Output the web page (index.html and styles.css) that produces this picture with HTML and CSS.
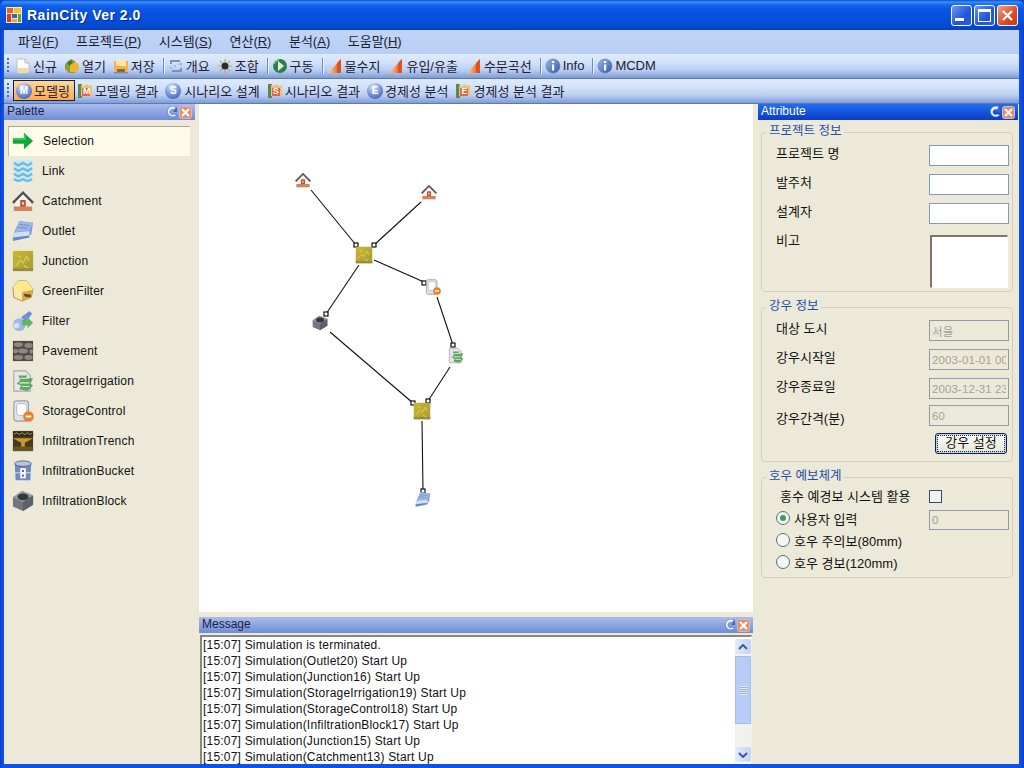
FILE: index.html
```html
<!DOCTYPE html>
<html lang="ko">
<head>
<meta charset="utf-8">
<title>RainCity Ver 2.0</title>
<link rel="stylesheet" href="styles.css">
</head>
<body>
<svg class="sprite" xmlns="http://www.w3.org/2000/svg">
  <defs>
    <linearGradient id="gBlue" x1="0" y1="0" x2="1" y2="1"><stop offset="0" stop-color="#9fb8ea"/><stop offset="1" stop-color="#2f55a5"/></linearGradient>
    <linearGradient id="gOrange" x1="0" y1="0" x2="1" y2="0"><stop offset="0" stop-color="#fbd38a"/><stop offset="1" stop-color="#e2501e"/></linearGradient>
    <linearGradient id="gOlive" x1="0" y1="0" x2="1" y2="1"><stop offset="0" stop-color="#c9b92e"/><stop offset="1" stop-color="#a79a35"/></linearGradient>
    <symbol id="i-arrow" viewBox="0 0 24 24"><path d="M1 9h12V3l10 9-10 9v-6H1z" fill="#11a83a"/><path d="M1 9h12V3l2 2v6H1z" fill="#2ecb55"/></symbol>
    <symbol id="i-link" viewBox="0 0 24 24"><rect x="2" y="0" width="20" height="24" fill="#c9e7f5"/><g fill="none" stroke="#6fb8de" stroke-width="2.400"><path d="M2 3l5 3 5-3 5 3 5-3M2 9l5 3 5-3 5 3 5-3M2 15l5 3 5-3 5 3 5-3M2 21l5 2 5-2 5 2 5-2"/></g></symbol>
    <symbol id="i-house" viewBox="0 0 24 24"><path d="M12 1L0 13l2 2L12 5l10 10 2-2z" fill="#505056"/><path d="M4 13l8-8 8 8v6H4z" fill="#f8f1e6"/><path d="M9 11h6v8H9z" fill="#b5543a"/><path d="M2 18h20v5H2z" fill="#d0855c"/><path d="M11 13h2v3h-2z" fill="#f3d9b0"/></symbol>
    <symbol id="i-outlet" viewBox="0 0 24 24"><path d="M8 1l15 2-2 13-20 5 2-9z" fill="#7e9fd8"/><path d="M8 1l15 2-4 8-15 2z" fill="#9db8e8"/><path d="M1 14l18-2v6L1 22z" fill="#d2def2"/><path d="M1 19l18-2v2L1 23z" fill="#6488c8"/><path d="M8 5l11 1M6 8l11 1" stroke="#6d8dc8"/></symbol>
    <symbol id="i-junction" viewBox="0 0 24 24"><rect x="1" y="1" width="22" height="22" fill="url(#gOlive)"/><path d="M4 17l5-6 3 3 4-7 3 5M6 6l4 2M13 17l5 3" fill="none" stroke="#d8ce66" stroke-width="1.300"/><path d="M1 20h22v3H1z" fill="#958c3f"/></symbol>
    <symbol id="i-greenfilter" viewBox="0 0 24 24"><path d="M7 1L1 8l1 11 9 4 10-4 2-9-7-9z" fill="#fbe7a6" stroke="#8e7b3c" stroke-width=".8"/><path d="M7 1L1 8l9 4 13-2-7-9z" fill="#ffe98b"/><path d="M11 13l11-2-1 8-10 4z" fill="#d7a84a"/><path d="M13 15l8 1-1 3-6-1z" fill="#5e4a20"/></symbol>
    <symbol id="i-filter" viewBox="0 0 24 24"><path d="M10 8l9-7 3 3-7 9z" fill="#6f8fd6"/><circle cx="8" cy="16" r="7" fill="#9db7e6"/><path d="M11 11h6v-3l6 6-6 6v-3h-6z" fill="#61b562"/><circle cx="5" cy="17" r="3" fill="#d5e2f6"/></symbol>
    <symbol id="i-pavement" viewBox="0 0 24 24"><rect x="1" y="1" width="22" height="22" fill="#4f4a46"/><g fill="#8f8880"><ellipse cx="7" cy="5" rx="5" ry="2.500"/><ellipse cx="18" cy="6" rx="4.500" ry="2.700"/><ellipse cx="12" cy="12" rx="5.500" ry="2.700"/><ellipse cx="4" cy="12" rx="2.500" ry="2.500"/><ellipse cx="21" cy="12.500" rx="2" ry="2.500"/><ellipse cx="7" cy="19" rx="5" ry="2.600"/><ellipse cx="18" cy="19" rx="4.500" ry="2.700"/></g></symbol>
    <symbol id="i-irrigation" viewBox="0 0 24 24"><path d="M2 1h13l5 5v17H2z" fill="#e6e6e6" stroke="#a9a9a9" stroke-width="1.200"/><path d="M7 6h10l-2 3h8l-3 6 3 2-6 6-9-2 2-4-5-2 4-4z" fill="#5fa864"/><path d="M9 9h8M8 14h11M11 18h8" stroke="#dcf1da" stroke-width="1.200"/></symbol>
    <symbol id="i-control" viewBox="0 0 24 24"><rect x="2" y="1" width="16" height="22" rx="3" fill="#dfe2e8" stroke="#9c9c9c" stroke-width="1.200"/><path d="M7 4h6a3 3 0 0 1 3 3v10H8a3 3 0 0 1-3-3V6z" fill="#fff" stroke="#aab8cf"/><circle cx="18" cy="18" r="5.800" fill="#e8812c"/><rect x="15" y="17" width="6" height="2" fill="#fff"/></symbol>
    <symbol id="i-trench" viewBox="0 0 24 24"><rect x="1" y="1" width="22" height="22" fill="#473a1e"/><path d="M1 2h22v5H1z" fill="#2f2a1d"/><path d="M2 5l3-2 3 2 3-2 3 2 3-2 3 2 2-2" stroke="#b9a462" fill="none"/><path d="M1 9h22l-9 5v5h-4v-5z" fill="#c99b2d"/><path d="M1 18h22v5H1z" fill="#6b5326"/></symbol>
    <symbol id="i-bucket" viewBox="0 0 24 24"><path d="M3 4h18l-1 18H4z" fill="#7089c0"/><ellipse cx="12" cy="4" rx="9" ry="3" fill="#b7c4e0" stroke="#51648f"/><rect x="9" y="9" width="6" height="11" fill="#fff"/><rect x="11" y="11" width="2" height="2" fill="#40507c"/><rect x="11" y="16" width="2" height="2" fill="#40507c"/><path d="M3 14h6M15 14h6" stroke="#dfe6f4"/></symbol>
    <symbol id="i-block" viewBox="0 0 24 24"><path d="M1 8l10-7 12 5v10l-11 7-11-5z" fill="#73767f"/><path d="M1 8l10-7 12 5-11 7z" fill="#959aa4"/><ellipse cx="12" cy="7.500" rx="6" ry="3.600" fill="#34363d"/><path d="M12 13l11-7v10l-11 7z" fill="#5d6069"/></symbol>
    <symbol id="t-doc" viewBox="0 0 16 16"><path d="M2 1h8l4 4v10H2z" fill="#fff" stroke="#bdbdbd"/><path d="M3 10h10v4H3z" fill="#f4d9a0"/><path d="M10 1v4h4" fill="#e4e4e4" stroke="#bdbdbd"/></symbol>
    <symbol id="t-open" viewBox="0 0 16 16"><path d="M1 6l6-5 4 2 1 4 3 3-4 5H5L1 11z" fill="#8f9c3a"/><path d="M6 5h8l1 4-3 5H6z" fill="#f1b52c"/><path d="M3 4l4-2 2 3-4 3z" fill="#48743a"/></symbol>
    <symbol id="t-save" viewBox="0 0 16 16"><path d="M1 3h14v12H1z" fill="#f3b24c"/><path d="M3 2h10v6H3z" fill="#ffe6a8"/><path d="M4 11h8v3H4z" fill="#8a6d2e"/><path d="M1 14h14v1.500H1z" fill="#7f86b3"/></symbol>
    <symbol id="t-over" viewBox="0 0 16 16"><path d="M2 2h10v2H4v2H2zM14 14H4v-2h8v-2h2z" fill="#7a93b8"/><path d="M6 7h2v2H6zM2 9h2v2H2zM11 5h3v2h-3z" fill="#a3b9d6"/></symbol>
    <symbol id="t-comb" viewBox="0 0 16 16"><circle cx="8" cy="8" r="3.500" fill="#2b2b2b"/><g stroke="#c5a74a" stroke-width="1.200"><path d="M8 1v3M8 12v3M1 8h3M12 8h3M3 3l2 2M11 11l2 2M13 3l-2 2M5 11l-2 2"/></g></symbol>
    <symbol id="t-run" viewBox="0 0 16 16"><circle cx="8" cy="8" r="7" fill="#2e7d4a"/><path d="M6 3l6 5-6 5z" fill="#e6f7d8"/><path d="M2 6a6 6 0 0 1 5-4" stroke="#8fdc9e" fill="none"/></symbol>
    <symbol id="t-tri" viewBox="0 0 16 16"><path d="M14 1v14H1C5 12 9 6 14 1z" fill="url(#gOrange)"/><path d="M10 5l4-4v14h-4z" fill="#e0531d"/></symbol>
    <symbol id="t-info" viewBox="0 0 16 16"><circle cx="8" cy="8" r="7" fill="url(#gBlue)" stroke="#5476b5" stroke-width=".6"/><rect x="7" y="3" width="2.200" height="2" fill="#fff"/><rect x="7" y="6.500" width="2.200" height="6" fill="#fff"/></symbol>
    <symbol id="t-rep" viewBox="0 0 16 16"><path d="M1 1h4v14H1z" fill="#5a8a4a"/><path d="M4 2l3 1 3-2 2 2 3-1v11H4z" fill="#f4c070"/><rect x="5" y="5" width="8" height="8" fill="#e0654a"/></symbol>
    <symbol id="t-refresh" viewBox="0 0 12 12"><path d="M10 1a5.500 5.500 0 1 0 1 8L8 8a2.500 2.500 0 1 1 0-4z" fill="#e9f0fc" stroke="#3f66b5" stroke-width=".6"/><path d="M11 1v5H7z" fill="#3f66b5"/></symbol>
    <symbol id="t-close" viewBox="0 0 13 13"><rect x=".5" y=".5" width="12" height="12" rx="2" fill="#ea8a6a" stroke="#c9c3c0"/><path d="M3 3l7 7M10 3l-7 7" stroke="#fff" stroke-width="2.200"/></symbol>
    <symbol id="t-app" viewBox="0 0 16 16"><rect x="0" y="0" width="16" height="16" fill="#f4e9c8"/><rect x="1" y="1" width="6" height="5" fill="#e8641e"/><rect x="8" y="1" width="7" height="5" fill="#f2c22b"/><rect x="1" y="7" width="4" height="8" fill="#e0392b"/><rect x="6" y="7" width="5" height="4" fill="#3a62b8"/><rect x="12" y="7" width="3" height="8" fill="#5aa24a"/><rect x="6" y="12" width="5" height="3" fill="#f2a12b"/></symbol>
  </defs>
</svg>

<div class="window">
  <header class="titlebar">
    <svg class="app-icon"><use href="#t-app"/></svg>
    <span class="title">RainCity Ver 2.0</span>
    <div class="caption-buttons">
      <div class="cap cap-blue"><span class="cap-min"></span></div>
      <div class="cap cap-blue"><span class="cap-max"></span></div>
      <div class="cap cap-red"><svg class="cap-x" viewBox="0 0 13 13"><path d="M2 2l9 9M11 2l-9 9" stroke="#fff" stroke-width="2.400"/></svg></div>
    </div>
  </header>

  <div class="inner">
    <nav class="menubar">
      <span class="menu">파일(<u>F</u>)</span>
      <span class="menu">프로젝트(<u>P</u>)</span>
      <span class="menu">시스템(<u>S</u>)</span>
      <span class="menu">연산(<u>R</u>)</span>
      <span class="menu">분석(<u>A</u>)</span>
      <span class="menu">도움말(<u>H</u>)</span>
    </nav>

    <div class="toolbar">
      <span class="grip"></span>
      <span class="tool"><svg class="ticon"><use href="#t-doc"/></svg>신규</span>
      <span class="tool"><svg class="ticon"><use href="#t-open"/></svg>열기</span>
      <span class="tool"><svg class="ticon"><use href="#t-save"/></svg>저장</span>
      <span class="sep"></span>
      <span class="tool"><svg class="ticon"><use href="#t-over"/></svg>개요</span>
      <span class="tool"><svg class="ticon"><use href="#t-comb"/></svg>조합</span>
      <span class="sep"></span>
      <span class="tool"><svg class="ticon"><use href="#t-run"/></svg>구동</span>
      <span class="sep"></span>
      <span class="tool tool-tri"><svg class="ticon"><use href="#t-tri"/></svg>물수지</span>
      <span class="tool tool-tri"><svg class="ticon"><use href="#t-tri"/></svg>유입/유출</span>
      <span class="tool"><svg class="ticon"><use href="#t-tri"/></svg>수문곡선</span>
      <span class="sep"></span>
      <span class="tool"><svg class="ticon"><use href="#t-info"/></svg>Info</span>
      <span class="sep"></span>
      <span class="tool"><svg class="ticon"><use href="#t-info"/></svg>MCDM</span>
    </div>

    <div class="toolbar toolbar-second">
      <span class="grip"></span>
      <span class="tool tool-active"><span class="ticon ball">M</span>모델링</span>
      <span class="tool tool-after-active"><span class="ticon rep"><svg class="ticon"><use href="#t-rep"/></svg><b class="rep-letter">M</b></span>모델링 결과</span>
      <span class="tool tool-wide"><span class="ticon ball">S</span>시나리오 설계</span>
      <span class="tool"><span class="ticon rep"><svg class="ticon"><use href="#t-rep"/></svg><b class="rep-letter">S</b></span>시나리오 결과</span>
      <span class="tool"><span class="ticon ball">E</span>경제성 분석</span>
      <span class="tool"><span class="ticon rep"><svg class="ticon"><use href="#t-rep"/></svg><b class="rep-letter">E</b></span>경제성 분석 결과</span>
    </div>

    <main class="workspace">
      <aside class="palette">
        <div class="pane-head pane-head-soft">
          <span>Palette</span>
          <span class="pane-tools"><svg class="pin"><use href="#t-refresh"/></svg><svg class="close"><use href="#t-close"/></svg></span>
        </div>
        <ul class="palette-list">
          <li class="pal pal-selected"><svg class="pal-icon"><use href="#i-arrow"/></svg><span>Selection</span></li>
          <li class="pal"><svg class="pal-icon"><use href="#i-link"/></svg><span>Link</span></li>
          <li class="pal"><svg class="pal-icon"><use href="#i-house"/></svg><span>Catchment</span></li>
          <li class="pal"><svg class="pal-icon"><use href="#i-outlet"/></svg><span>Outlet</span></li>
          <li class="pal"><svg class="pal-icon"><use href="#i-junction"/></svg><span>Junction</span></li>
          <li class="pal"><svg class="pal-icon"><use href="#i-greenfilter"/></svg><span>GreenFilter</span></li>
          <li class="pal"><svg class="pal-icon"><use href="#i-filter"/></svg><span>Filter</span></li>
          <li class="pal"><svg class="pal-icon"><use href="#i-pavement"/></svg><span>Pavement</span></li>
          <li class="pal"><svg class="pal-icon"><use href="#i-irrigation"/></svg><span>StorageIrrigation</span></li>
          <li class="pal"><svg class="pal-icon"><use href="#i-control"/></svg><span>StorageControl</span></li>
          <li class="pal"><svg class="pal-icon"><use href="#i-trench"/></svg><span>InfiltrationTrench</span></li>
          <li class="pal"><svg class="pal-icon"><use href="#i-bucket"/></svg><span>InfiltrationBucket</span></li>
          <li class="pal"><svg class="pal-icon"><use href="#i-block"/></svg><span>InfiltrationBlock</span></li>
        </ul>
      </aside>

      <section class="center">
        <div class="canvas">
          <svg class="diagram" viewBox="199 104 554 508" xmlns="http://www.w3.org/2000/svg">
            <g class="wire">
              <path d="M311 190L356 245"/><path d="M421 202L374 245"/>
              <path d="M374 260L424 282"/><path d="M437 297L453 345"/>
              <path d="M359 265L326 314"/><path d="M330 332L413 403"/>
              <path d="M450 367L428 401"/><path d="M422 421L423 490"/>
            </g>
            <g class="handle">
              <rect x="354" y="243" width="4" height="4"/><rect x="372" y="243" width="4" height="4"/>
              <rect x="422" y="281" width="4" height="4"/><rect x="451" y="343" width="4" height="4"/>
              <rect x="324" y="312" width="4" height="4"/><rect x="411" y="401" width="4" height="4"/>
              <rect x="426" y="399" width="4" height="4"/><rect x="421" y="489" width="4" height="4"/>
            </g>
            <use href="#i-house" x="295" y="172" width="16" height="16"/>
            <use href="#i-house" x="421" y="184" width="16" height="16"/>
            <use href="#i-junction" x="355" y="246" width="18" height="18"/>
            <use href="#i-control" x="425" y="279" width="16" height="16"/>
            <use href="#i-block" x="312" y="315" width="16" height="16"/>
            <use href="#i-irrigation" x="448" y="347" width="16" height="17"/>
            <use href="#i-junction" x="413" y="402" width="18" height="18"/>
            <use href="#i-outlet" x="415" y="491" width="16" height="17"/>
          </svg>
        </div>
        <div class="pane-head pane-head-soft message-head">
          <span>Message</span>
          <span class="pane-tools"><svg class="pin"><use href="#t-refresh"/></svg><svg class="close"><use href="#t-close"/></svg></span>
        </div>
        <div class="messages">
          <div class="message-lines">
            <div>[15:07] Simulation is terminated.</div>
            <div>[15:07] Simulation(Outlet20) Start Up</div>
            <div>[15:07] Simulation(Junction16) Start Up</div>
            <div>[15:07] Simulation(StorageIrrigation19) Start Up</div>
            <div>[15:07] Simulation(StorageControl18) Start Up</div>
            <div>[15:07] Simulation(InfiltrationBlock17) Start Up</div>
            <div>[15:07] Simulation(Junction15) Start Up</div>
            <div>[15:07] Simulation(Catchment13) Start Up</div>
          </div>
          <div class="scrollbar">
            <div class="sb-btn"><svg viewBox="0 0 10 6" class="sb-arrow"><path d="M1 5l4-4 4 4" fill="none" stroke="#3f5a94" stroke-width="2"/></svg></div>
            <div class="sb-thumb"><span class="sb-grip"></span></div>
            <div class="sb-track"></div>
            <div class="sb-btn"><svg viewBox="0 0 10 6" class="sb-arrow"><path d="M1 1l4 4 4-4" fill="none" stroke="#3f5a94" stroke-width="2"/></svg></div>
          </div>
        </div>
      </section>

      <aside class="attribute">
        <div class="pane-head pane-head-strong">
          <span>Attribute</span>
          <span class="pane-tools"><svg class="pin"><use href="#t-refresh"/></svg><svg class="close"><use href="#t-close"/></svg></span>
        </div>
        <div class="attribute-body">
          <section class="group group-project">
            <h3 class="group-title">프로젝트 정보</h3>
            <div class="field"><label>프로젝트 명</label><input class="txt" type="text"></div>
            <div class="field"><label>발주처</label><input class="txt" type="text"></div>
            <div class="field"><label>설계자</label><input class="txt" type="text"></div>
            <div class="field field-note"><label>비고</label><div class="note"></div></div>
          </section>

          <section class="group group-rain">
            <h3 class="group-title">강우 정보</h3>
            <div class="field"><label>대상 도시</label><input class="txt" type="text" value="서울" disabled></div>
            <div class="field"><label>강우시작일</label><input class="txt" type="text" value="2003-01-01 00" disabled></div>
            <div class="field field-tight"><label>강우종료일</label><input class="txt" type="text" value="2003-12-31 23" disabled></div>
            <div class="field field-low"><label>강우간격(분)</label><input class="txt" type="text" value="60" disabled></div>
            <div class="button-row"><div class="btn"><span class="btn-face">강우 설정</span></div></div>
          </section>

          <section class="group group-warn">
            <h3 class="group-title">호우 예보체계</h3>
            <div class="check-row"><span class="check-label">홍수 예경보 시스템 활용</span><span class="checkbox"></span></div>
            <div class="radio-row radio-first"><span class="radio radio-on"></span><span class="radio-label">사용자 입력</span><input class="txt txt-radio" type="text" value="0" disabled></div>
            <div class="radio-row"><span class="radio"></span><span class="radio-label">호우 주의보(80mm)</span></div>
            <div class="radio-row"><span class="radio"></span><span class="radio-label">호우 경보(120mm)</span></div>
          </section>
        </div>
      </aside>
    </main>
  </div>
</div>
</body>
</html>
```
FILE: styles.css
```css
* { box-sizing: border-box; }
html, body { margin: 0; padding: 0; width: 1024px; height: 768px; overflow: hidden; background: #0a46d0; }
body { font-family: "Liberation Sans", "Noto Sans CJK KR", sans-serif; font-size: 12px; color: #111; }
.sprite { position: absolute; width: 0; height: 0; }

.window { width: 1024px; height: 768px; display: flex; flex-direction: column; border-radius: 7px 7px 0 0; overflow: hidden;
  background: linear-gradient(90deg, #0a3ed0 0, #0f52e8 3px, #0f52e8 1020px, #0a3ed0 1024px); }

.titlebar { height: 30px; flex: none; display: flex; align-items: center; padding: 0 6px 0 6px;
  background: linear-gradient(180deg, #0a50d8 0, #3a8df6 2px, #1464ee 5px, #0a55e4 10px, #0450dc 20px, #0348cf 27px, #0a3fb8 30px); }
.app-icon { width: 16px; height: 16px; flex: none; }
.title { margin-left: 5px; color: #fff; font-weight: bold; font-size: 14px; letter-spacing: .5px; text-shadow: 1px 1px 1px #0a2a90; }
.caption-buttons { margin-left: auto; display: flex; gap: 2px; }
.cap { width: 21px; height: 21px; border: 1px solid #fff; border-radius: 3px; display: flex; align-items: center; justify-content: center; position: relative; }
.cap-blue { background: linear-gradient(135deg, #6f97ef, #1f55d8 60%, #2a5fd8); }
.cap-red { background: linear-gradient(135deg, #f0a080, #dd4a22 60%, #c5351a); }
.cap-min { width: 9px; height: 3px; background: #fff; align-self: flex-end; margin: 0 5px 4px 0; }
.cap-max { width: 13px; height: 13px; border: 1px solid #fff; border-top-width: 3px; }
.cap-x { width: 13px; height: 13px; }

.inner { flex: 1; min-height: 0; display: flex; flex-direction: column; margin: 0 5px 4px 4px; }

.menubar { height: 24px; flex: none; display: flex; align-items: center; padding: 0 0 3px 14px; gap: 17.500px;
  background: linear-gradient(180deg, #c0d4f6, #b8cef3); font-size: 13px; color: #1c2030; }
.menu { white-space: nowrap; }

.toolbar { height: 25px; flex: none; display: flex; align-items: center; padding: 0 0 2px 3px; font-size: 13px; color: #1c2030;
  background: linear-gradient(180deg, #dfeafc 0, #d2e1f9 35%, #b9cef2 65%, #7e9bd6 96%, #3c5a8c 100%); white-space: nowrap; }
.toolbar-second { gap: 7px; }
.grip { width: 2px; height: 15px; margin-right: 6px; flex: none; background: repeating-linear-gradient(180deg, #4a6aa5 0, #4a6aa5 2px, transparent 2px, transparent 4px); }
.toolbar-second .grip { margin-right: -3px; }
.tool { display: inline-flex; align-items: center; gap: 2px; margin-right: 7px; }
.tool-tri { margin-right: 8px; }
.toolbar-second .tool { margin-right: 0; }
.toolbar-second .tool-active { margin-right: -5px; }
.toolbar-second .tool-wide { gap: 3px; }
.ticon { width: 16px; height: 16px; flex: none; display: inline-block; }
.ball { border-radius: 50%; background: radial-gradient(circle at 40% 25%, #dfe8fb 0, #7d9adb 45%, #2f4fa2 100%); color: #fff; font-size: 10px; font-weight: bold; text-align: center; line-height: 16px; }
.rep { position: relative; }
.rep-letter { position: absolute; left: 6px; top: 3px; font-size: 9px; color: #fff; line-height: 10px; }
.tool-active { height: 21px; padding: 0 4px 0 2px; border: 1px solid #10204f; background: linear-gradient(180deg, #ffd79a, #fda94e); }
.sep { width: 1px; height: 16px; background: #6e8cc0; box-shadow: 1px 0 0 #eaf1fd; margin: 0 4px 0 1px; flex: none; }

.workspace { flex: 1; min-height: 0; display: grid; grid-template-columns: 191px 554px 261px; column-gap: 4px; background: #ece9d8; }
.workspace > .attribute { margin-left: 1px; }

.pane-head { height: 16px; flex: none; display: flex; align-items: center; justify-content: space-between; padding: 0 3px 2px 3px; line-height: 13px; }
.pane-tools { margin-top: 2px; display: flex; align-items: center; gap: 1px; }
.pane-head-soft { background: linear-gradient(180deg, #aabdec, #6f8cd8); color: #1b2340; }
.pane-head-strong { background: linear-gradient(180deg, #1f6ff2, #0a3cc4); color: #fff; }
.pin { width: 12px; height: 12px; }
.close { width: 13px; height: 13px; }

.palette { display: flex; flex-direction: column; }
.palette-list { list-style: none; margin: 6px 5px 0 4px; padding: 0; display: grid; grid-auto-rows: 30px; letter-spacing: .2px; }
.pal { display: flex; align-items: center; gap: 8px; padding-left: 4px; }
.pal-icon { width: 22px; height: 22px; flex: none; }
.pal-selected { background: #fffbe9; border-top: 1px solid #a9a79a; border-left: 1px solid #b9b7aa; padding: 0 0 1px 3px; gap: 9px; }

.center { display: flex; flex-direction: column; min-height: 0; }
.canvas { height: 508px; flex: none; background: #fff; }
.diagram { display: block; width: 554px; height: 508px; }
.wire path { fill: none; stroke: #111; stroke-width: 1.100; }
.handle rect { fill: #fff; stroke: #111; stroke-width: 1.200; }

.message-head { margin-top: 5px; }
.messages { flex: 1; min-height: 0; margin: 2px 1px 0; display: flex; overflow: hidden; background: #fff; border-style: solid; border-width: 2px 1px 0 2px; border-color: #8a8778 #eee #eee #8a8778; }
.message-lines { flex: 1; padding: 0 0 0 1px; line-height: 16px; letter-spacing: .2px; white-space: nowrap; overflow: hidden; }
.scrollbar { width: 16px; flex: none; display: flex; flex-direction: column; margin: 2px 0 2px; background: #f3f1ec; }
.sb-btn { height: 15px; flex: none; display: flex; align-items: center; justify-content: center; background: linear-gradient(90deg, #e2ebfc, #c4d4f6); border-radius: 2px; }
.sb-arrow { width: 10px; height: 6px; }
.sb-thumb { height: 68px; flex: none; margin-top: 2px; background: #b7ccf6; border: 1px solid #a5bcee; display: flex; align-items: center; justify-content: center; }
.sb-grip { width: 7px; height: 9px; background: repeating-linear-gradient(180deg, #e7eefc 0, #e7eefc 1px, #93ace0 1px, #93ace0 2px); }
.sb-track { flex: 1; }

.attribute { display: flex; flex-direction: column; }
.attribute-body { padding: 12px 5px 0 3px; display: flex; flex-direction: column; gap: 15px; }
.group { position: relative; border: 1px solid #d2cfbc; border-radius: 4px; padding-left: 14px; padding-right: 3px; }
.group-project { height: 160px; padding-top: 12px; }
.group-rain { height: 155px; padding-top: 12px; }
.group-warn { height: 101px; padding-top: 10px; }
.group-title { position: absolute; left: 4px; top: -10px; margin: 0; padding: 0 3px; background: #ece9d8; font-size: 12.500px; font-weight: normal; color: #1d4fa8; line-height: 16px; white-space: nowrap; }

.field { display: flex; justify-content: space-between; align-items: flex-start; height: 21px; margin-bottom: 8px; font-size: 13px; }
.field label { line-height: 17px; }
.field-note { height: 56px; margin-top: 3px; margin-bottom: 0; }
.field-tight { margin-bottom: 6px; }
.field-low label { line-height: 27px; }
.txt { width: 80px; height: 21px; border: 1px solid #7f9db9; background: #fff; padding: 0 2px; font: 11.500px "Liberation Sans", "Noto Sans CJK KR", sans-serif; color: #a5a296; letter-spacing: .1px; }
.txt:disabled { background: #ece9d8; color: #a5a296; border-color: #8f9ca8; }
.note { width: 78px; height: 53px; margin: 3px 1px 0 0; background: #fff; border-style: solid; border-width: 2px 1px 1px 2px; border-color: #7a7668 #fff #fff #7a7668; }
.button-row { display: flex; justify-content: flex-end; padding-right: 2px; margin-top: -1px; }
.btn { width: 72px; height: 21px; border: 1px solid #10204f; border-radius: 3px; padding: 1px; background: #b9cdf0; }
.btn-face { display: block; height: 100%; text-align: center; line-height: 15px; font-size: 13px; background: linear-gradient(180deg, #fffffb, #e8e6d8); outline: 1px dotted #222; outline-offset: -1px; }

.check-row { display: flex; align-items: center; justify-content: space-between; height: 15px; padding-left: 4px; padding-right: 67px; font-size: 13px; }
.checkbox { width: 13px; height: 13px; border: 1px solid #2a4a80; background: #f2f1ea; margin-top: 2px; }
.radio-row { display: flex; align-items: center; height: 22px; font-size: 13px; position: relative; }
.radio-first { margin-top: 4px; }
.radio { width: 14px; height: 14px; border-radius: 50%; border: 1px solid #4f6f90; background: #f6f5ef; flex: none; display: flex; align-items: center; justify-content: center; }
.radio-on::after { content: ""; width: 6px; height: 6px; border-radius: 50%; background: #3f9c55; }
.radio-label { margin-left: 4px; white-space: nowrap; }
.txt-radio { margin-left: auto; margin-top: 4px; height: 20px; }
```
